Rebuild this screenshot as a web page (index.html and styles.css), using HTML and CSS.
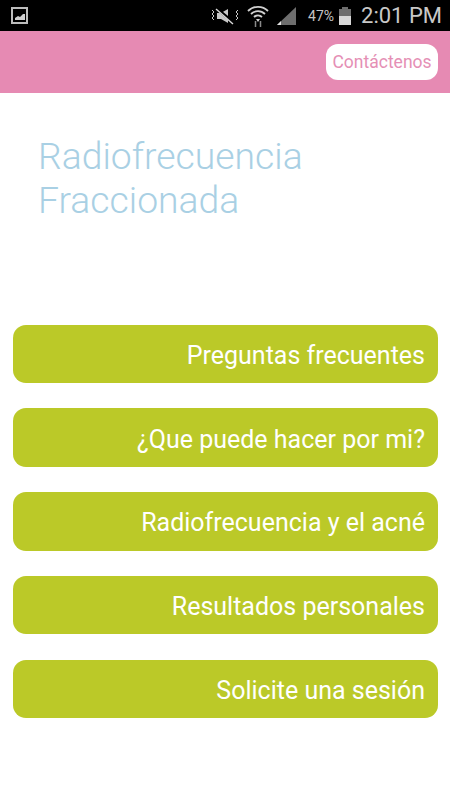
FILE: index.html
```html
<!DOCTYPE html>
<html lang="es">
<head>
<meta charset="utf-8">
<title>Radiofrecuencia Fraccionada</title>
<link rel="stylesheet" href="styles.css">
</head>
<body>
<div class="status">
  <svg class="st-pic" width="18" height="18" viewBox="0 0 18 18"><rect x="1" y="1" width="15" height="15" fill="none" stroke="#bdbdbd" stroke-width="2"/><path d="M4 13v-2l3-2 2 1 3-3 2 0v6z" fill="#d0d0d0"/></svg>
  <div class="st-right">
    <svg class="st-mute" width="30" height="18" viewBox="0 0 30 18"><path d="M2 3l2 2-2 2 2 2-2 2 2 2M28 3l-2 2 2 2-2 2 2 2-2 2" fill="none" stroke="#c8c8c8" stroke-width="1"/><path d="M7 6h4l7-4v14l-7-4H7z" fill="#c8c8c8"/><path d="M6 1l18 15" stroke="#000" stroke-width="3"/><path d="M6 2l17 15" stroke="#d8d8d8" stroke-width="1.4"/></svg>
    <svg class="st-wifi" width="22" height="24" viewBox="0 0 22 24"><path d="M1 7a14 14 0 0 1 20 0M4 10a10 10 0 0 1 14 0M7 13a6 6 0 0 1 8 0" fill="none" stroke="#d0d0d0" stroke-width="1.8"/><path d="M9 15h4l-2 3z" fill="#d0d0d0"/><path d="M8.5 17v6M13.5 17v6" stroke="#8a8a8a" stroke-width="1.5"/></svg>
    <svg class="st-sig" width="22" height="20" viewBox="0 0 22 20"><path d="M1 19L20 1v18z" fill="#6e6e6e"/><path d="M1 19l4-4v4z" fill="#e0e0e0"/></svg>
    <span class="st-pct">47%</span>
    <svg class="st-bat" width="14" height="20" viewBox="0 0 14 20"><path d="M4 1h6v2h3v16H1V3h3z" fill="#6e6e6e"/><path d="M1 10h12v9H1z" fill="#d8d8d8"/></svg>
    <span class="st-time">2:01 PM</span>
  </div>
</div>
<header class="bar"><a class="contact">Contáctenos</a></header>
<h1 class="title">Radiofrecuencia<br>Fraccionada</h1>
<nav class="menu">
  <a class="item">Preguntas frecuentes</a>
  <a class="item">¿Que puede hacer por mi?</a>
  <a class="item">Radiofrecuencia y el acné</a>
  <a class="item">Resultados personales</a>
  <a class="item">Solicite una sesión</a>
</nav>
</body>
</html>
```
FILE: styles.css
```css
* { box-sizing: border-box; }
html, body { margin: 0; padding: 0; }
body { width: 450px; height: 800px; overflow: hidden; background: #fff; font-family: Roboto, sans-serif; }
.status { height: 31px; background: #000; display: flex; align-items: center; justify-content: space-between; padding: 0 8px 0 11px; }
.st-right { display: flex; align-items: center; }
.st-wifi { margin-left: 7px; }
.st-sig { margin-left: 7px; }
.st-pct { font-size: 14px; color: #c4c4c4; margin-left: 10px; }
.st-bat { margin-left: 4px; }
.st-time { font-size: 22px; color: #c8c8c8; margin-left: 9px; }
.bar { height: 62px; background: #e68ab3; display: flex; justify-content: flex-end; align-items: flex-start; padding: 13px 12px 0 0; }
.contact { width: 112px; height: 36px; border-radius: 12px; background: #fff; color: #e58fb5; font-size: 17.5px; display: flex; align-items: center; justify-content: center; }
.title { margin: 41px 0 0 38px; font-weight: 300; font-size: 37.3px; line-height: 44px; color: #a9d0e4; }
.menu { margin-top: 102.5px; padding: 0 12px 0 13px; display: flex; flex-direction: column; gap: 25.25px; }
.item { height: 58.5px; border-radius: 13px; background: #bbc928; color: #fff; font-size: 25px; display: flex; align-items: center; justify-content: flex-end; padding: 3px 13px 0 0; }
```
